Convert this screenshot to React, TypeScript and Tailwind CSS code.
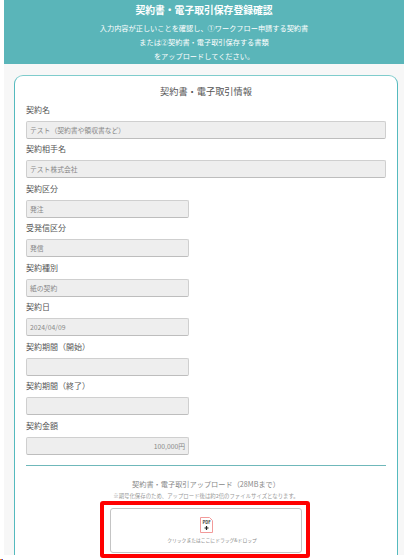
const font = { fontFamily: '"Noto Sans CJK JP", "Noto Sans", sans-serif' };

function Field({ label, value, wide, right }: { label: string; value?: string; wide?: boolean; right?: boolean }) {
  return (
    <div className="flex flex-col">
      <div className="h-[21.5px] flex items-center text-[8px] text-[#555]">{label}</div>
      <div
        className={`h-[18px] rounded-[2px] border border-[#cfcfcf] border-b-[#bdbdbd] bg-[#eeeeee] px-[3px] flex items-center text-[6.8px] text-[#888] ${wide ? "w-[360px]" : "w-[163px]"} ${right ? "justify-end" : ""}`}
      >
        {value}
      </div>
    </div>
  );
}

export default function App() {
  return (
    <div className="relative w-[408px] h-[560px] bg-white overflow-hidden" style={font}>
      <div className="ml-[4px] w-[400px] h-[555px] bg-[#f7f7f7]">
        <div className="h-[64px] bg-[#5ab5b9] text-white flex flex-col items-center">
          <div className="mt-[3px] h-[14px] flex items-center text-[9.8px] font-bold">契約書・電子取引保存登録確認</div>
          <div className="mt-[4px] h-[14px] flex items-center text-[7.2px]">入力内容が正しいことを確認し、①ワークフロー申請する契約書</div>
          <div className="h-[14px] flex items-center text-[7.2px]">または②契約書・電子取引保存する書類</div>
          <div className="h-[15px] flex items-center text-[7.2px]">をアップロードしてください。</div>
        </div>
        <div className="ml-[10px] mt-[11px] w-[384px] h-[480px] rounded-t-[9px] border border-b-0 border-x-[#55babe] border-t-[#7fcccc] bg-white px-[11px]">
          <div className="pt-[9px] h-[23.1px] flex items-center justify-center text-[9.2px] text-[#555]">契約書・電子取引情報</div>
          <Field label="契約名" value="テスト（契約書や領収書など）" wide />
          <Field label="契約相手名" value="テスト株式会社" wide />
          <Field label="契約区分" value="発注" />
          <Field label="受発信区分" value="発信" />
          <Field label="契約種別" value="紙の契約" />
          <Field label="契約日" value="2024/04/09" />
          <Field label="契約期間（開始）" />
          <Field label="契約期間（終了）" />
          <Field label="契約金額" value="100,000円" right />
          <div className="mt-[10.4px] h-px bg-[#6fb8ba]" />
          <div className="mt-[12px] h-[12px] flex items-center justify-center text-[7.2px] text-[#888]">契約書・電子取引アップロード（28MBまで）</div>
          <div className="mt-[1px] h-[10px] flex items-center justify-center text-[5.4px] text-[#999]">※期号化保存のため、アップロード後は約2倍のファイルサイズとなります。</div>
          <div className="ml-[74px] w-[210px] h-[57px] rounded-[3px] border-[4px] border-[#ff0000] bg-white pl-[6px] pr-[4px] pt-[3px] pb-[1px]">
            <div className="w-full h-full rounded-[3px] border border-[#c4c4c4] bg-white flex flex-col items-center pt-[8px]">
              <svg width="13" height="16" viewBox="0 0 13 16" className="shrink-0">
                <path d="M.5.5H9.5L12.5 3.5V15.5H.5Z" fill="#fff" stroke="#f29a9a" />
                <text x="6.5" y="6.5" textAnchor="middle" fontSize="4.2" fontWeight="700" fill="#333">PDF</text>
                <path d="M6.5 9V13M4.5 11H8.5" stroke="#222" strokeWidth="1.2" />
              </svg>
              <div className="mt-[3px] pl-[12px] text-[4.8px] text-[#888] leading-[8px]">クリックまたはここにドラッグ&amp;ドロップ</div>
            </div>
          </div>
        </div>
      </div>
      <div className="absolute left-0 bottom-0 flex h-px">
        <div className="w-px bg-[#f59e0b]" />
        <div className="w-px bg-[#ef4444]" />
        <div className="w-px bg-[#2563eb]" />
      </div>
    </div>
  );
}
